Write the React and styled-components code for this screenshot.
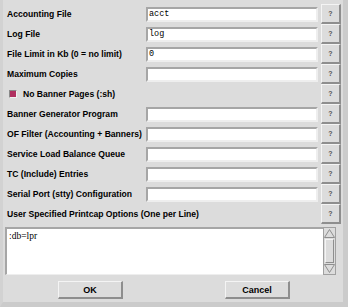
import React from "react"
import styled, { createGlobalStyle } from "styled-components"

const Global = createGlobalStyle`
  html, body { margin:0; padding:0; background:#dcdcdc; }
  * { box-sizing:border-box; }
`

const Window = styled.div`
  width:348px;
  height:307px;
  background:#dcdcdc;
  border-left:3px solid #d2d2d2;
  border-right:5px solid #cbcbcb;
  border-bottom:5px solid #cbcbcb;
  padding:4px 2px 0 2px;
  font-family:"Liberation Sans", Arial, sans-serif;
  display:flex;
  flex-direction:column;
`

const Form = styled.div`
  display:grid;
  grid-template-columns:138px 1fr 20px;
  grid-auto-rows:20px;
  column-gap:3px;
  align-items:center;
`

const Label = styled.div`
  font-size:8.6px;
  font-weight:bold;
  color:#000;
  padding-left:2px;
  white-space:nowrap;
  grid-column:${p => (p.$wide ? "1 / 3" : "auto")};
`

const Input = styled.div`
  height:15px;
  background:#fff;
  border-top:2px solid #a6a6a6;
  border-left:2px solid #a6a6a6;
  border-bottom:2px solid #eeeeee;
  border-right:2px solid #eeeeee;
  font-family:"Liberation Mono", "DejaVu Sans Mono", monospace;
  font-size:8.5px;
  line-height:11px;
  padding-left:1px;
  color:#000;
`

const Help = styled.button`
  width:20px;
  height:20px;
  padding:0;
  background:#dcdcdc;
  border-top:1px solid #f4f4f4;
  border-left:1px solid #f4f4f4;
  border-bottom:2px solid #8e8e8e;
  border-right:2px solid #8e8e8e;
  font-family:"Liberation Sans", Arial, sans-serif;
  font-size:7px;
  font-weight:bold;
  color:#555;
`

const Check = styled.label`
  grid-column:1 / 3;
  display:flex;
  align-items:center;
  gap:6px;
  padding-left:4px;
  font-size:8.6px;
  font-weight:bold;
`

const Box = styled.span`
  width:8px;
  height:8px;
  background:#b03060;
  border-top:1px solid #8a8a8a;
  border-left:1px solid #8a8a8a;
  border-bottom:1px solid #f0f0f0;
  border-right:1px solid #f0f0f0;
`

const TextArea = styled.div`
  margin-top:3px;
  display:flex;
  height:48px;
  padding-right:5px;
`

const Text = styled.div`
  flex:1;
  background:#fff;
  border-top:2px solid #a6a6a6;
  border-left:2px solid #a6a6a6;
  border-bottom:1px solid #eeeeee;
  font-family:"Liberation Serif", "DejaVu Serif", serif;
  font-size:9.5px;
  padding:2px 2px;
`

const Scroll = styled.div`
  width:13px;
  background:#dcdcdc;
  border:1px solid #a0a0a0;
  display:flex;
  flex-direction:column;
  align-items:center;
  justify-content:space-between;
  padding:1px 0;
`

const Thumb = styled.div`
  width:9px;
  flex:1;
  margin:1px 0;
  border-top:1px solid #f4f4f4;
  border-left:1px solid #f4f4f4;
  border-bottom:1px solid #8e8e8e;
  border-right:1px solid #8e8e8e;
`

const Buttons = styled.div`
  display:flex;
  gap:102px;
  padding:6px 0 0 53px;
`

const Btn = styled.button`
  width:65px;
  height:18px;
  background:#dcdcdc;
  border-top:1px solid #f4f4f4;
  border-left:1px solid #f4f4f4;
  border-bottom:2px solid #8e8e8e;
  border-right:2px solid #8e8e8e;
  font-family:"Liberation Sans", Arial, sans-serif;
  font-size:9px;
  font-weight:bold;
  color:#000;
  padding:0;
`

const Arrow = ({ up }) => (
  <svg width="11" height="9" viewBox="0 0 11 9">
    {up ? (
      <polygon points="5.5,0.5 10.5,8.5 0.5,8.5" fill="#dcdcdc" stroke="#8e8e8e" />
    ) : (
      <polygon points="0.5,0.5 10.5,0.5 5.5,8.5" fill="#dcdcdc" stroke="#8e8e8e" />
    )}
  </svg>
)

const fields = [
  ["Accounting File", "acct"],
  ["Log File", "log"],
  ["File Limit in Kb (0 = no limit)", "0"],
  ["Maximum Copies", ""],
]
const fields2 = [
  ["Banner Generator Program", ""],
  ["OF Filter (Accounting + Banners)", ""],
  ["Service Load Balance Queue", ""],
  ["TC (Include) Entries", ""],
  ["Serial Port (stty) Configuration", ""],
]

export default function App() {
  return (
    <>
      <Global />
      <Window>
        <Form>
          {fields.map(([l, v]) => (
            <React.Fragment key={l}>
              <Label>{l}</Label>
              <Input>{v}</Input>
              <Help>?</Help>
            </React.Fragment>
          ))}
          <Check><Box />No Banner Pages (:sh)</Check>
          <Help>?</Help>
          {fields2.map(([l, v]) => (
            <React.Fragment key={l}>
              <Label>{l}</Label>
              <Input>{v}</Input>
              <Help>?</Help>
            </React.Fragment>
          ))}
          <Label $wide>User Specified Printcap Options (One per Line)</Label>
          <Help>?</Help>
        </Form>
        <TextArea>
          <Text>:db=lpr</Text>
          <Scroll>
            <Arrow up />
            <Thumb />
            <Arrow />
          </Scroll>
        </TextArea>
        <Buttons>
          <Btn>OK</Btn>
          <Btn>Cancel</Btn>
        </Buttons>
      </Window>
    </>
  )
}
